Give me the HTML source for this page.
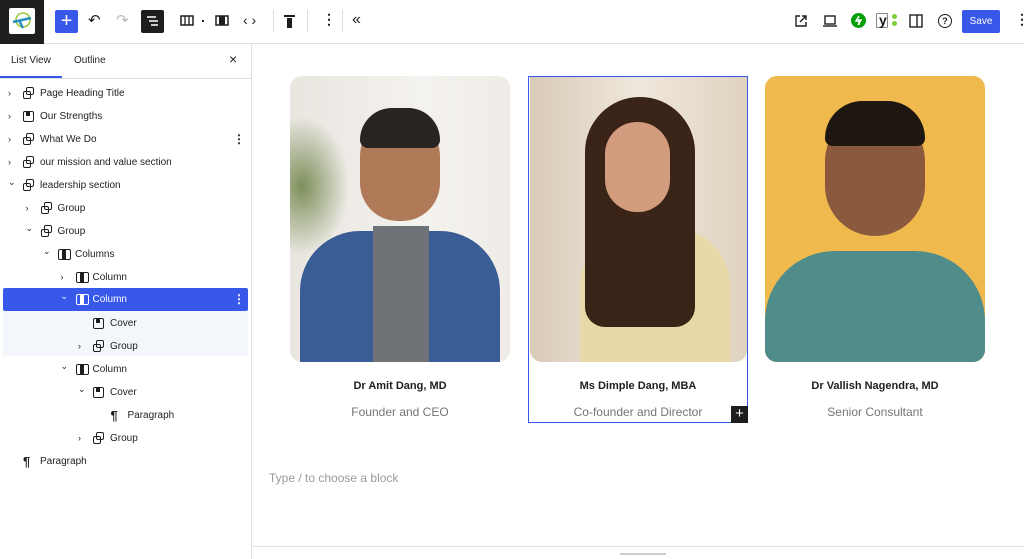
<!DOCTYPE html>
<html><head><style>
*{box-sizing:border-box;margin:0;padding:0}
body{width:1024px;height:559px;overflow:hidden;background:#fff;font-family:"Liberation Sans",sans-serif;color:#1e1e1e;position:relative}
.a{position:absolute}
.top{left:0;top:0;width:1024px;height:44px;border-bottom:1px solid #e0e0e0}
.side{left:0;top:44px;width:252px;height:515px;border-right:1px solid #e0e0e0}
.row{position:absolute;height:23px;font-size:10px;line-height:23px;white-space:nowrap}
.ic{position:absolute;top:6px;width:11px;height:11px;border:1.3px solid #1e1e1e;border-radius:2px}
.ar{position:absolute;font-size:9px;top:0}
.name{font-size:11px;font-weight:bold;text-align:center;color:#1e1e1e}
.role{font-size:12px;text-align:center;color:#757575}
</style></head><body>
<div class="a top">
 <div class="a" style="left:0;top:0;width:44px;height:44px;background:#1e1e1e"></div>
 <div class="a" style="left:9px;top:8px;width:26px;height:26px;background:#fff;border-radius:2px"></div>
 <svg class="a" style="left:9px;top:8px" width="26" height="26"><circle cx="14" cy="12" r="7" fill="none" stroke="#9bc93a" stroke-width="1.5"/><path d="M4 14 L22 10 M10 12 L14 20" stroke="#2a8fbf" stroke-width="2.5"/></svg>
 <div class="a" style="left:55px;top:10px;width:23px;height:23px;background:#3858e9;border-radius:2px;color:#fff;font-size:20px;line-height:22px;text-align:center">+</div>
 <div class="a" style="left:88px;top:11px;font-size:15px">↶</div>
 <div class="a" style="left:116px;top:11px;font-size:15px;color:#bbb">↷</div>
 <div class="a" style="left:141px;top:10px;width:23px;height:23px;background:#1e1e1e;border-radius:2px"></div>
 <svg class="a" style="left:145px;top:14px" width="15" height="15"><path d="M2 3h9M4 7h9M6 11h7" stroke="#fff" stroke-width="1.5"/></svg>
 <svg class="a" style="left:180px;top:15px" width="14" height="12"><rect x="1" y="1" width="12" height="9" fill="none" stroke="#1e1e1e" stroke-width="1.5"/><path d="M5 1v9M9 1v9" stroke="#1e1e1e" stroke-width="1.3"/></svg>
 <div class="a" style="left:202px;top:20px;width:2px;height:2px;background:#1e1e1e"></div>
 <svg class="a" style="left:215px;top:15px" width="14" height="12"><rect x="1" y="1" width="12" height="9" fill="none" stroke="#1e1e1e" stroke-width="1.5"/><rect x="4" y="1" width="6" height="9" fill="#1e1e1e"/></svg>
 <div class="a" style="left:243px;top:12px;font-size:14px">‹ ›</div>
 <div class="a" style="left:273px;top:10px;width:1px;height:22px;background:#ddd"></div>
 <div class="a" style="left:284px;top:15px;width:11px;height:2px;background:#1e1e1e"></div>
 <div class="a" style="left:287px;top:18px;width:5px;height:10px;background:#1e1e1e"></div>
 <div class="a" style="left:307px;top:10px;width:1px;height:22px;background:#ddd"></div>
 <div class="a" style="left:322px;top:11px;font-size:14px;font-weight:bold">⋮</div>
 <div class="a" style="left:342px;top:10px;width:1px;height:22px;background:#ddd"></div>
 <div class="a" style="left:352px;top:11px;font-size:16px">«</div>
 <svg class="a" style="left:794px;top:14px" width="14" height="14"><path d="M6 2H2v10h10V8M8 2h4v4M12 2L6 8" fill="none" stroke="#1e1e1e" stroke-width="1.4"/></svg>
 <svg class="a" style="left:822px;top:14px" width="16" height="14"><rect x="3" y="2" width="10" height="8" fill="none" stroke="#1e1e1e" stroke-width="1.4"/><path d="M1 12h14" stroke="#1e1e1e" stroke-width="1.4"/></svg>
 <div class="a" style="left:851px;top:13px;width:15px;height:15px;border-radius:50%;background:#069e08"></div>
 <svg class="a" style="left:851px;top:13px" width="15" height="15"><path d="M8 3L5 8h3v4M7 12l3-5H7" stroke="#fff" stroke-width="1.5" fill="none"/></svg>
 <div class="a" style="left:876px;top:13px;width:12px;height:15px;border:1px solid #888;border-radius:1px"></div>
 <div class="a" style="left:879px;top:12px;font-size:14px;font-weight:bold">y</div>
 <div class="a" style="left:892px;top:14px;width:5px;height:5px;border-radius:50%;background:#7ad03a"></div>
 <div class="a" style="left:892px;top:21px;width:5px;height:5px;border-radius:50%;background:#7ad03a"></div>
 <svg class="a" style="left:909px;top:14px" width="14" height="14"><rect x="1" y="1" width="12" height="12" fill="none" stroke="#1e1e1e" stroke-width="1.4"/><path d="M8 1v12" stroke="#1e1e1e" stroke-width="1.4"/></svg>
 <div class="a" style="left:938px;top:14px;width:14px;height:14px;border:1.4px solid #1e1e1e;border-radius:50%;font-size:9px;text-align:center;line-height:12px;font-weight:bold">?</div>
 <div class="a" style="left:962px;top:10px;width:38px;height:23px;background:#3858e9;border-radius:2px;color:#fff;font-size:10px;line-height:23px;text-align:center">Save</div>
 <div class="a" style="left:1015px;top:11px;font-size:14px;font-weight:bold">⋮</div>
</div>
<div class="a side">
 <div class="a" style="left:11px;top:11px;font-size:10px">List View</div>
 <div class="a" style="left:74px;top:11px;font-size:10px">Outline</div>
 <div class="a" style="left:229px;top:7px;font-size:14px">×</div>
 <div class="a" style="left:0;top:32px;width:62px;height:2px;background:#3858e9"></div>
 <div class="a" style="left:0;top:34px;width:252px;height:1px;background:#e0e0e0"></div>
 <div class="a" style="left:3px;top:244px;width:245px;height:23px;background:#3858e9;border-radius:2px"></div>
 <div class="a" style="left:3px;top:267px;width:245px;height:45px;background:#f3f6fa"></div>
</div>
<div id="list"></div>
<script>
var items=[[0,'›','g','Page Heading Title'],[0,'›','c','Our Strengths'],[0,'›','g','What We Do',1],[0,'›','g','our mission and value section'],[0,'⌄','g','leadership section'],[1,'›','g','Group'],[1,'⌄','g','Group'],[2,'⌄','col','Columns'],[3,'›','c1','Column'],[3,'⌄','c1','Column',1],[4,'','c','Cover'],[4,'›','g','Group'],[3,'⌄','c1','Column'],[4,'⌄','c','Cover'],[5,'','p','Paragraph'],[4,'›','g','Group'],[0,'','p','Paragraph']];
var h='';items.forEach(function(it,i){var y=81+i*23,l=it[0]*17.5,sel=i==9,c=sel?'#fff':'#1e1e1e';
var ty=sel?y:y+1;
h+='<div class="row" style="left:0;top:'+ty+'px;width:248px;color:'+c+'">';
if(it[1])h+='<span class="ar" style="left:'+(l+8)+'px;'+(it[1]=='⌄'?'top:-3px;':'')+'">'+it[1]+'</span>';
var ix=l+23;
if(it[2]=='p')h+='<span style="position:absolute;left:'+ix+'px;font-size:13px;font-weight:bold">¶</span>';
else if(it[2]=='g')h+='<span class="ic" style="left:'+(ix+3)+'px;top:5px;width:8px;height:8px;border-color:'+c+'"></span><span class="ic" style="left:'+ix+'px;top:9px;width:8px;height:8px;border-color:'+c+'"></span>';
else if(it[2]=='c')h+='<span class="ic" style="left:'+ix+'px;border-color:'+c+'"><span style="position:absolute;left:2px;top:0;width:4px;height:4px;background:'+c+'"></span></span>';
else h+='<span class="ic" style="left:'+ix+'px;width:13px;border-color:'+c+'"><span style="position:absolute;left:3px;top:0;width:4px;height:100%;background:'+c+'"></span></span>';
h+='<span style="position:absolute;left:'+(l+40)+'px">'+it[3]+'</span>';
if(it[4])h+='<span style="position:absolute;left:233px;font-weight:bold;font-size:12px">⋮</span>';
h+='</div>';});
document.getElementById('list').innerHTML=h;
</script>
<div class="a" style="left:290px;top:76px;width:220px;height:286px;border-radius:12px;overflow:hidden;background:linear-gradient(90deg,#e9e6e0,#f4f2ee 60%,#efece7)">
 <div class="a" style="left:0;top:40px;width:60px;height:140px;background:radial-gradient(ellipse at 20% 50%,#7d8f5a,transparent 70%)"></div>
 <div class="a" style="left:10px;top:155px;width:200px;height:150px;border-radius:60px 60px 0 0;background:#3b5d96"></div>
 <div class="a" style="left:83px;top:150px;width:56px;height:140px;background:#6f7378"></div>
 <div class="a" style="left:70px;top:40px;width:80px;height:105px;border-radius:40px 40px 38px 38px;background:#b07a58"></div>
 <div class="a" style="left:70px;top:32px;width:80px;height:40px;border-radius:40px 40px 10px 10px;background:#2a2420"></div>
</div>
<div class="a" style="left:528px;top:76px;width:220px;height:347px;border:1px solid #3858e9"></div>
<div class="a" style="left:530px;top:77px;width:217px;height:285px;border-radius:0 0 12px 12px;overflow:hidden;background:linear-gradient(90deg,#d9cbb8,#efe7dc 50%,#e0d3c0)">
 <div class="a" style="left:50px;top:150px;width:150px;height:150px;border-radius:60px 60px 0 0;background:#e9d9a8"></div>
 <div class="a" style="left:55px;top:20px;width:110px;height:230px;border-radius:55px 55px 20px 20px;background:#3a2418"></div>
 <div class="a" style="left:75px;top:45px;width:65px;height:90px;border-radius:32px;background:#d49c7e"></div>
</div>
<div class="a" style="left:765px;top:76px;width:220px;height:286px;border-radius:12px;overflow:hidden;background:#f0b94e">
 <div class="a" style="left:0;top:175px;width:220px;height:120px;border-radius:70px 70px 0 0;background:#4f8c8a"></div>
 <div class="a" style="left:60px;top:35px;width:100px;height:125px;border-radius:50px;background:#8b5a3e"></div>
 <div class="a" style="left:60px;top:25px;width:100px;height:45px;border-radius:50px 50px 10px 10px;background:#1e1611"></div>
</div>
<div class="a name" style="left:290px;top:380px;width:220px">Dr Amit Dang, MD</div>
<div class="a name" style="left:528px;top:380px;width:220px">Ms Dimple Dang, MBA</div>
<div class="a name" style="left:765px;top:380px;width:220px">Dr Vallish Nagendra, MD</div>
<div class="a role" style="left:290px;top:405px;width:220px">Founder and CEO</div>
<div class="a role" style="left:528px;top:405px;width:220px">Co-founder and Director</div>
<div class="a role" style="left:765px;top:405px;width:220px">Senior Consultant</div>
<div class="a" style="left:731px;top:406px;width:17px;height:17px;background:#1e1e1e;color:#fff;font-size:15px;line-height:16px;text-align:center">+</div>
<div class="a" style="left:269px;top:471px;font-size:12px;color:#9a9a9a">Type / to choose a block</div>
<div class="a" style="left:253px;top:546px;width:771px;height:1px;background:#e0e0e0"></div>
<div class="a" style="left:620px;top:553px;width:46px;height:2px;background:#ccc"></div>
</body></html>
